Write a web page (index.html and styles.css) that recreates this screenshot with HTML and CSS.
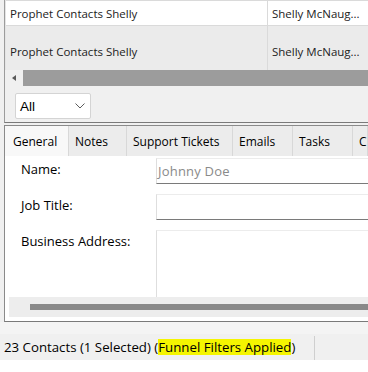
FILE: index.html
```html
<!DOCTYPE html>
<html lang="en">
  <head>
    <meta charset="UTF-8" />
    <meta name="viewport" content="width=device-width, initial-scale=1.0" />
    <title>Contacts</title>
    <link rel="stylesheet" href="styles.css">
  </head>
  <body>
    <div class="window">
      <div class="list-panel">
        <div class="grid">
          <div class="grid-row">
            <div class="cell cell-name">Prophet Contacts Shelly</div>
            <div class="cell cell-owner">Shelly McNaug...</div>
          </div>
          <div class="grid-row selected">
            <div class="cell cell-name">Prophet Contacts Shelly</div>
            <div class="cell cell-owner">Shelly McNaug...</div>
          </div>
        </div>
        <div class="hscroll">
          <div class="hscroll-btn"><span class="arrow-left"></span></div>
          <div class="hscroll-thumb"></div>
        </div>
        <div class="filter-bar">
          <div class="combo">
            <span>All</span>
            <svg width="10" height="6" viewBox="0 0 10 6">
              <polyline points="0.5,0.5 5,5 9.5,0.5" fill="none" stroke="#5c5c5c" stroke-width="1" />
            </svg>
          </div>
        </div>
      </div>

      <div class="detail-panel">
        <div class="tabs">
          <div class="tab active">General</div>
          <div class="tab">Notes</div>
          <div class="tab">Support Tickets</div>
          <div class="tab">Emails</div>
          <div class="tab">Tasks</div>
          <div class="tab">C</div>
        </div>
        <div class="tab-body">
          <div class="form">
            <label class="form-label">Name:</label>
            <div class="field placeholder">Johnny Doe</div>
            <label class="form-label">Job Title:</label>
            <div class="field"></div>
            <label class="form-label">Business Address:</label>
            <div class="field multi"></div>
          </div>
          <div class="scroll-band">
            <div class="scroll-band-thumb"></div>
          </div>
        </div>
      </div>

      <div class="spacer"></div>

      <div class="status-bar">
        <div class="status-text">23 Contacts (1 Selected) (<mark>Funnel Filters Applied</mark>)</div>
        <div class="status-rest"></div>
      </div>
    </div>
  </body>
</html>
```

FILE: styles.css
```css
* {
  box-sizing: border-box;
}

html,
body {
  margin: 0;
  padding: 0;
}

body {
  width: 368px;
  height: 372px;
  overflow: hidden;
  background: #ffffff;
  font-family: "Open Sans", "Noto Sans", sans-serif;
  font-size: 12px;
  color: #111;
}

.window {
  height: 360px;
  background: #f0f0f0;
  padding-left: 4px;
  display: flex;
  flex-direction: column;
}

/* contact list */

.list-panel {
  height: 123px;
  border-left: 1px solid #9c9c9c;
  border-bottom: 1px solid #7a7a7a;
  display: flex;
  flex-direction: column;
}

.grid {
  border-left: 1px solid #e4e4e4;
}

.grid-row {
  display: flex;
  height: 26px;
  background: #ffffff;
  border-top: 1px solid #dadada;
  border-bottom: 1px solid #dadada;
}

.grid-row.selected {
  height: 44px;
  border-top: none;
  border-bottom: none;
  background: #ebebeb;
  padding-top: 6px;
}

.cell {
  display: flex;
  align-items: center;
  padding-left: 4px;
  white-space: nowrap;
  overflow: hidden;
  font-size: 11.5px;
  color: #222;
}

.cell-name {
  width: 261px;
}

.cell-owner {
  flex: 1;
  border-left: 1px solid #dadada;
}

.grid-row.selected .cell-owner {
  margin-top: -6px;
  padding-top: 6px;
}

.hscroll {
  display: flex;
  height: 16px;
  background: #f0f0f0;
}

.hscroll-btn {
  width: 18px;
  display: flex;
  align-items: center;
  justify-content: center;
}

.arrow-left {
  width: 0;
  height: 0;
  border-top: 3px solid transparent;
  border-bottom: 3px solid transparent;
  border-right: 4px solid #5a5a5a;
}

.hscroll-thumb {
  flex: 1;
  background: #9c9c9c;
}

.filter-bar {
  flex: 1;
  padding: 7px 0 0 10px;
}

.combo {
  width: 76px;
  height: 26px;
  background: #ffffff;
  border: 1px solid #d4d4d4;
  border-radius: 2px;
  display: flex;
  align-items: center;
  justify-content: space-between;
  padding: 0 5px 0 4px;
  font-family: "Liberation Sans", sans-serif;
  font-size: 13.5px;
  color: #000;
}

/* details */

.detail-panel {
  margin-top: 2px;
  height: 197px;
  border-top: 1px solid #8a8a8a;
  border-left: 1px solid #8a8a8a;
  border-bottom: 1px solid #7a7a7a;
  display: flex;
  flex-direction: column;
}

.tabs {
  display: grid;
  grid-template-columns: 64px 58px 106px 60px 60px 1fr;
  height: 30px;
  background: #ececec;
}

.tab {
  display: flex;
  align-items: center;
  padding-left: 6px;
  border-right: 1px solid #d8d8d8;
  white-space: nowrap;
  overflow: hidden;
  color: #000;
}

.tab.active {
  background: #f8f8f8;
  padding-left: 8px;
}

.tab-body {
  flex: 1;
  background: #ffffff;
  padding-bottom: 4px;
  display: flex;
  flex-direction: column;
}

.form {
  display: grid;
  grid-template-columns: 135px 1fr;
  grid-template-rows: 26px 26px 67px;
  row-gap: 10px;
  padding: 2px 0 0 16px;
  font-size: 13px;
}

.form-label {
  padding-top: 2px;
  color: #000;
}

.field {
  display: flex;
  align-items: center;
  padding-left: 1px;
  background: #ffffff;
  border-left: 1px solid #dedede;
  border-top: 1px solid #ececec;
  border-bottom: 1px solid #7a7a7a;
}

.field.placeholder {
  color: #8a8a8a;
  letter-spacing: 0.2px;
}

.field.multi {
  border-bottom: none;
}

.scroll-band {
  height: 20px;
  margin-left: 4px;
  padding: 7px 0 0 21px;
  background: #ededed;
}

.scroll-band-thumb {
  height: 6px;
  background: #898989;
}

.spacer {
  height: 12px;
  background: #f4f4f4;
  margin-left: -4px;
}

/* status */

.status-bar {
  height: 26px;
  display: flex;
}

.status-text {
  width: 310px;
  display: flex;
  align-items: center;
  white-space: nowrap;
  font-size: 13.25px;
  color: #000;
}

.status-text mark {
  display: inline-block;
  line-height: 16px;
  background: #f5f500;
  color: #000;
}

.status-rest {
  flex: 1;
  margin-top: 2px;
  border-left: 1px solid #cfcfcf;
}
```
